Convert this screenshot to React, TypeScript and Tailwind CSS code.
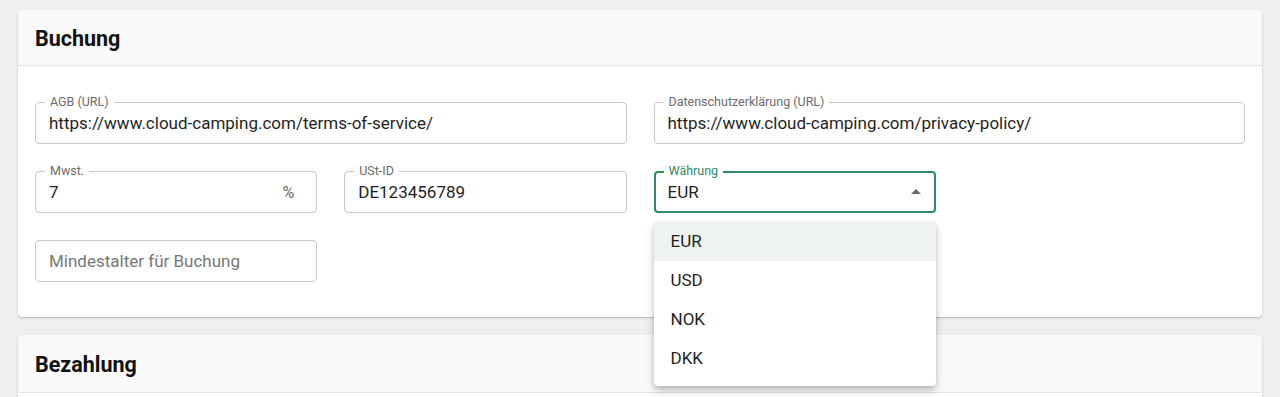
import React from "react";

function Field({
  label,
  value,
  placeholder,
  suffix,
  className = "",
}: {
  label?: string;
  value?: string;
  placeholder?: string;
  suffix?: string;
  className?: string;
}) {
  return (
    <div className={`relative h-[42px] rounded-[4px] border border-[#c8c8c8] bg-white ${className}`}>
      {label && (
        <span className="absolute left-[9px] top-[-9px] bg-white px-[5px] text-[12.5px] leading-[15px] text-[#6b6b6b]">
          {label}
        </span>
      )}
      <div className="flex h-full items-center pl-[13px] pr-[22px] pt-[2px]">
        {value ? (
          <span className="flex-1 text-[17px] text-[#1f1f1f]">{value}</span>
        ) : (
          <span className="flex-1 text-[17px] text-[#777]">{placeholder}</span>
        )}
        {suffix && <span className="text-[16px] text-[#6b6b6b]">{suffix}</span>}
      </div>
    </div>
  );
}

export default function App() {
  return (
    <div
      className="h-[397px] overflow-hidden bg-[#efefef] px-[18px] pt-[10px]"
      style={{ fontFamily: "Roboto, 'Noto Sans', sans-serif" }}
    >
      <div className="rounded-[4px] bg-white shadow-[0_1px_2px_rgba(0,0,0,0.25)]">
        <div className="flex h-[56px] items-center rounded-t-[4px] border-b border-[#e4e4e4] bg-[#fafafa] px-[17px] pt-[3px]">
          <h2 className="text-[21.5px] font-bold text-[#111]">Buchung</h2>
        </div>
        <div className="grid grid-cols-4 gap-x-[27px] gap-y-[27px] px-[17px] pb-[35px] pt-[36px]">
          <Field className="col-span-2" label="AGB (URL)" value="https://www.cloud-camping.com/terms-of-service/" />
          <Field className="col-span-2" label="Datenschutzerklärung (URL)" value="https://www.cloud-camping.com/privacy-policy/" />
          <Field label="Mwst." value="7" suffix="%" />
          <Field label="USt-ID" value="DE123456789" />
          <div className="relative">
            <div className="relative h-[42px] rounded-[4px] border-2 border-[#2f8a66] bg-white">
              <span className="absolute left-[8px] top-[-10px] bg-white px-[5px] text-[12.5px] leading-[15px] text-[#2f8a66]">
                Währung
              </span>
              <div className="flex h-full items-center pl-[12px] pr-[13px] pt-[2px]">
                <span className="flex-1 text-[17px] text-[#1f1f1f]">EUR</span>
                <svg width="10" height="5" viewBox="0 0 10 5" className="mb-[3px]">
                  <path d="M0 5 L5 0 L10 5 Z" fill="#6b6b6b" />
                </svg>
              </div>
            </div>
            <div className="absolute left-0 right-0 top-[51px] z-10 rounded-[4px] bg-white pb-[8px] shadow-[0_5px_10px_rgba(0,0,0,0.2),0_2px_4px_rgba(0,0,0,0.12)]">
              {["EUR", "USD", "NOK", "DKK"].map((c, i) => (
                <div
                  key={c}
                  className={`flex h-[39px] items-center px-[17px] text-[17px] text-[#1f1f1f] ${i === 0 ? "bg-[#eef3ef]" : ""}`}
                >
                  {c}
                </div>
              ))}
            </div>
          </div>
          <div />
          <Field placeholder="Mindestalter für Buchung" />
        </div>
      </div>
      <div className="mt-[18px] rounded-[4px] bg-white shadow-[0_1px_2px_rgba(0,0,0,0.25)]">
        <div className="flex h-[58px] items-center rounded-t-[4px] border-b border-[#e4e4e4] bg-[#fafafa] px-[17px] pt-[3px]">
          <h2 className="text-[21.5px] font-bold text-[#111]">Bezahlung</h2>
        </div>
        <div className="h-[40px]" />
      </div>
    </div>
  );
}
